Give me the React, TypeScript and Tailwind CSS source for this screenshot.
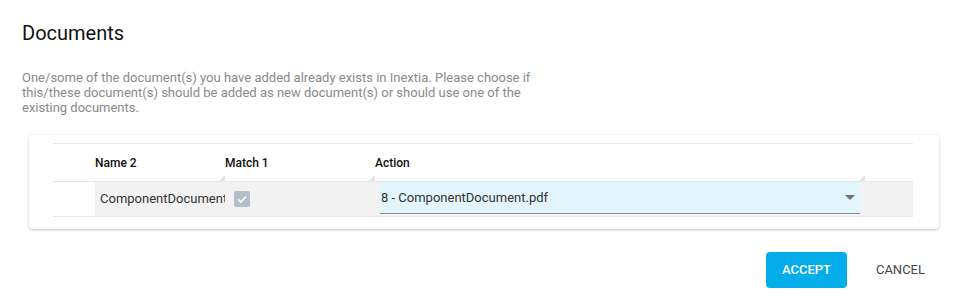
import React from 'react';

function ResizeMark() {
  return (
    <svg className="absolute right-0 bottom-0" width="6" height="6" viewBox="0 0 6 6">
      <polygon points="0,6 6,0 6,6" fill="#e2e2e2" />
    </svg>
  );
}

export default function App() {
  return (
    <div className="w-[965px] h-[301px] bg-white font-['Roboto',sans-serif] overflow-hidden">
      <div className="pl-[22px] pt-[20px]">
        <h1 className="text-[20px] leading-[26px] text-[#111]">Documents</h1>
        <p className="mt-[24px] w-[530px] text-[13px] leading-[15px] text-[#8a8a8a]">
          One/some of the document(s) you have added already exists in Inextia. Please choose if
          this/these document(s) should be added as new document(s) or should use one of the
          existing documents.
        </p>
      </div>

      <div className="ml-[29px] mt-[20px] w-[910px] rounded-[4px] bg-white pl-[24px] pr-[26px] pt-[8px] pb-[12px] shadow-[0_1px_3px_rgba(0,0,0,0.25)]">
        <div className="border-t border-[#e6e6e6]">
          <div className="flex h-[38px] items-center text-[12px] font-medium text-[#111] border-b border-[#e6e6e6]">
            <div className="w-[42px] h-full" />
            <div className="relative w-[130px] h-full flex items-center">
              Name 2
              <ResizeMark />
            </div>
            <div className="relative w-[150px] h-full flex items-center">
              Match 1
              <ResizeMark />
            </div>
            <div className="relative w-[490px] h-full flex items-center">
              Action
              <ResizeMark />
            </div>
            <div className="flex-1" />
          </div>
          <div className="flex h-[35px] border-b border-[#e6e6e6] text-[13px] text-[#333]">
            <div className="w-[42px] h-full bg-white" />
            <div className="flex flex-1 bg-[#f2f2f2]">
              <div className="w-[130px] h-full flex items-center pl-[5px] overflow-hidden whitespace-nowrap">
                ComponentDocument.pdf
              </div>
              <div className="w-[150px] h-full flex items-center pl-[9px]">
                <div className="w-[16px] h-[16px] rounded-[2px] bg-[#b3bec8] flex items-center justify-center">
                  <svg width="12" height="12" viewBox="0 0 12 12">
                    <path d="M2 6.2 L4.8 9 L10 3.5" stroke="#fff" strokeWidth="1.6" fill="none" />
                  </svg>
                </div>
              </div>
              <div className="w-[490px] h-full pl-[5px] pr-[5px]">
                <div className="h-[32px] bg-[#e3f5fc] border-b border-[#8c8c8c] flex items-center pl-[1px] pr-[5px] text-[#333]">
                  <span className="flex-1">8 - ComponentDocument.pdf</span>
                  <svg width="10" height="5" viewBox="0 0 10 5">
                    <polygon points="0,0 10,0 5,5" fill="#707070" />
                  </svg>
                </div>
              </div>
              <div className="flex-1" />
            </div>
          </div>
        </div>
      </div>

      <div className="flex justify-end items-center mt-[23px] pr-[20px] gap-[9px]">
        <button className="w-[81px] h-[36px] rounded-[4px] bg-[#03ade9] text-white text-[13px] font-medium uppercase">
          Accept
        </button>
        <button className="h-[36px] px-[20px] text-[13px] text-[#444] uppercase">
          Cancel
        </button>
      </div>
    </div>
  );
}
